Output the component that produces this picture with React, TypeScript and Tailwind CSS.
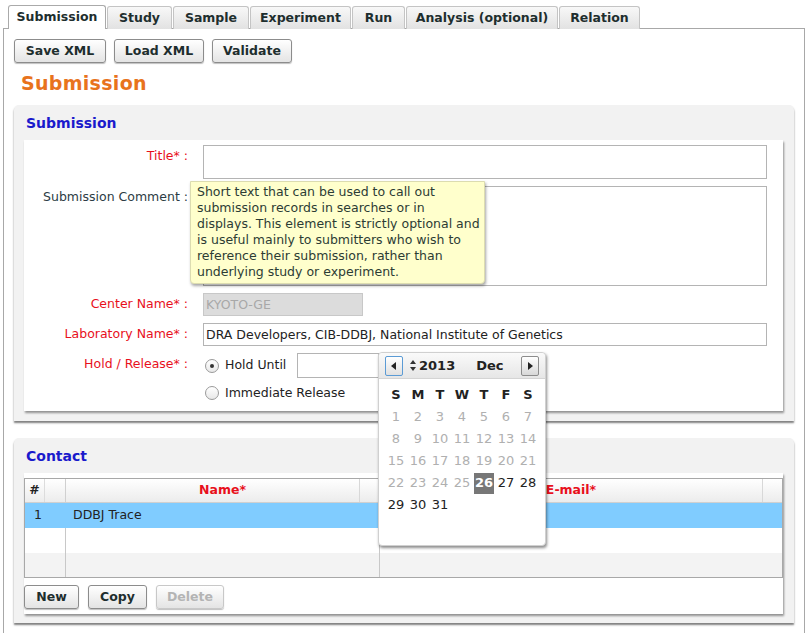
import React from "react";

const tabs = ["Submission", "Study", "Sample", "Experiment", "Run", "Analysis (optional)", "Relation"];
const tabWidths = ["w-[98px]", "w-[65px]", "w-[76px]", "w-[101px]", "w-[53px]", "w-[152px]", "w-[81px]"];

const Btn = ({ label, w, disabled }: { label: string; w: string; disabled?: boolean }) => (
  <button
    className={`${w} h-[24px] rounded-[3px] border text-[12.5px] font-bold bg-gradient-to-b from-white to-[#e4e4e4] shadow-[0_1px_1px_rgba(0,0,0,0.25)] ${
      disabled ? "border-[#c8c8c8] text-[#b4b4b4]" : "border-[#8c8c8c] text-[#1e2e2e]"
    }`}
  >
    {label}
  </button>
);

const Label = ({ text, red }: { text: string; red?: boolean }) => (
  <div className={`w-[164px] shrink-0 text-right pt-[2px] text-[12.5px] ${red ? "text-[#e8101c]" : "text-[#2c3c44]"}`}>
    {text}
  </div>
);

const Radio = ({ checked }: { checked?: boolean }) => (
  <span className="w-[14px] h-[14px] rounded-full border border-[#9a9a9a] bg-gradient-to-b from-white to-[#e8e8e8] flex items-center justify-center">
    {checked && <span className="w-[4px] h-[4px] rounded-full bg-[#333]" />}
  </span>
);

const days = ["S", "M", "T", "W", "T", "F", "S"];

const Calendar = () => {
  const cells: number[] = [];
  for (let i = 1; i <= 31; i++) cells.push(i);
  return (
    <div className="absolute left-[378px] top-[352px] w-[168px] h-[194px] bg-white rounded-[4px] border border-[#d0d0d0] shadow-[1px_2px_3px_rgba(0,0,0,0.45)]">
      <div className="h-[26px] flex items-center px-[6px] bg-gradient-to-b from-[#fafafa] to-[#e6e6e6] border-b border-[#d4d4d4] rounded-t-[4px]">
        <span className="w-[18px] h-[20px] rounded-[2px] border border-[#5b9bd5] bg-gradient-to-b from-white to-[#e0e0e0] flex items-center justify-center">
          <svg width="6" height="8" viewBox="0 0 6 8">
            <path d="M5 0 L0 4 L5 8 Z" fill="#222" />
          </svg>
        </span>
        <svg className="ml-[7px]" width="6" height="11" viewBox="0 0 6 11">
          <path d="M3 0 L6 4 L0 4 Z M3 11 L6 7 L0 7 Z" fill="#333" />
        </svg>
        <span className="ml-[3px] text-[13px] font-bold text-[#222]">2013</span>
        <span className="ml-[21px] text-[13px] font-bold text-[#222]">Dec</span>
        <span className="ml-auto w-[18px] h-[20px] rounded-[2px] border border-[#8c8c8c] bg-gradient-to-b from-white to-[#d8d8d8] flex items-center justify-center">
          <svg width="6" height="8" viewBox="0 0 6 8">
            <path d="M1 0 L6 4 L1 8 Z" fill="#222" />
          </svg>
        </span>
      </div>
      <div className="grid grid-cols-[repeat(7,22px)] px-[6px] pt-[5px] auto-rows-[22px] text-[13px]">
        {days.map((d, i) => (
          <div key={i} className="flex items-center justify-center font-bold text-[#222]">
            {d}
          </div>
        ))}
        {cells.map((n) => (
          <div key={n} className="flex items-center justify-center">
            {n === 26 ? (
              <span className="w-[20px] h-[21px] bg-[#777] text-white font-bold flex items-center justify-center">26</span>
            ) : (
              <span className={n < 26 ? "text-[#b0b0b0]" : "text-[#222]"}>{n}</span>
            )}
          </div>
        ))}
      </div>
    </div>
  );
};

export default function App() {
  return (
    <div className="relative w-[808px] h-[633px] bg-white overflow-hidden font-['DejaVu_Sans',Verdana,sans-serif] text-[#222]">
      {/* tabs */}
      <div className="flex pl-[8px] pt-[5px] gap-[1px]">
        {tabs.map((t, i) => (
          <div
            key={t}
            className={`${tabWidths[i]} flex items-center justify-center text-[12.5px] font-bold text-[#1e2e2e] border border-b-0 rounded-t-[3px] ${
              i === 0 ? "bg-white border-[#aaa] relative z-10 h-[24px]" : "bg-gradient-to-b from-[#f8f8f8] to-[#e2e2e2] border-[#c4c4c4] h-[23px] mt-[1px]"
            }`}
          >
            {t}
          </div>
        ))}
      </div>

      <div className="mx-[3px] -mt-px border border-[#a8a8a8] border-b-0 h-[700px] pl-[10px] pr-[9px]">
        <div className="flex gap-[8px] pt-[10px]">
          <Btn label="Save XML" w="w-[92px]" />
          <Btn label="Load XML" w="w-[90px]" />
          <Btn label="Validate" w="w-[80px]" />
        </div>
        <h1 className="mt-[8px] ml-[7px] text-[19px] font-bold text-[#e8731c] tracking-[0.3px] leading-[24px]">Submission</h1>

        {/* Submission panel */}
        <div className="mt-[10px] w-[780px] rounded-t-[5px] bg-[#f2f2f2] shadow-[0_2px_2px_rgba(0,0,0,0.5)] px-[10px] pb-[10px]">
          <div className="h-[35px] pt-[8px] pl-[2px] text-[14px] font-bold text-[#1a1acc]">Submission</div>
          <div className="relative w-[759px] bg-white shadow-[1px_2px_2px_rgba(0,0,0,0.4)] pt-[5px] pb-[7px] pr-[16px]">
            <div className="flex gap-[15px]">
              <Label text="Title* :" red />
              <div className="flex-1 h-[34px] border border-[#b4b4b4]" />
            </div>
            <div className="flex gap-[15px] mt-[7px]">
              <Label text="Submission Comment :" />
              <div className="flex-1 h-[100px] border border-[#b4b4b4]" />
            </div>
            <div className="flex gap-[15px] mt-[7px]">
              <Label text="Center Name* :" red />
              <div className="w-[160px] h-[23px] border border-[#c8c8c8] bg-[#dcdcdc] text-[12.5px] text-[#a8a8a8] pl-[2px] leading-[21px]">
                KYOTO-GE
              </div>
            </div>
            <div className="flex gap-[15px] mt-[7px]">
              <Label text="Laboratory Name* :" red />
              <div className="flex-1 h-[23px] border border-[#b4b4b4] text-[12.5px] text-[#222] pl-[2px] leading-[21px]">
                DRA Developers, CIB-DDBJ, National Institute of Genetics
              </div>
            </div>
            <div className="flex gap-[15px] mt-[7px]">
              <Label text="Hold / Release* :" red />
              <div className="flex flex-col">
                <div className="flex items-center h-[25px]">
                  <span className="ml-[2px]">
                    <Radio checked />
                  </span>
                  <span className="ml-[6px] text-[12.5px] text-[#222]">Hold Until</span>
                  <div className="ml-[11px] w-[82px] h-[25px] border border-[#b4b4b4]" />
                </div>
                <div className="flex items-center h-[22px] mt-[4px]">
                  <span className="ml-[2px]">
                    <Radio />
                  </span>
                  <span className="ml-[6px] text-[12.5px] text-[#222]">Immediate Release</span>
                </div>
              </div>
            </div>

            {/* tooltip */}
            <div className="absolute left-[166px] top-[41px] w-[295px] h-[103px] bg-[#ffffcc] border border-[#dcdcb0] rounded-b-[4px] shadow-[1px_2px_3px_rgba(0,0,0,0.35)] pl-[6px] pr-[4px] pt-[2px] text-[12.5px] leading-[16px] text-[#2c3c34]">
              Short text that can be used to call out submission records in searches or in displays. This element is strictly optional and is useful mainly to submitters who wish to reference their submission, rather than underlying study or experiment.
            </div>
          </div>
        </div>

        {/* Contact panel */}
        <div className="mt-[17px] w-[780px] rounded-t-[5px] bg-[#f2f2f2] shadow-[0_2px_2px_rgba(0,0,0,0.5)] px-[10px] pb-[9px]">
          <div className="h-[35px] pt-[8px] pl-[2px] text-[14px] font-bold text-[#1a1acc]">Contact</div>
          <div className="w-[759px] bg-white shadow-[1px_2px_2px_rgba(0,0,0,0.4)] pt-[5px] pb-[5px]">
            <div className="w-[759px] h-[100px] border border-[#a8a8a8] flex flex-col text-[12.5px]">
              <div className="h-[24px] flex bg-gradient-to-b from-white to-[#ececec] border-b border-[#d0d0d0] font-bold">
                <div className="w-[20px] flex items-center justify-center border-r border-[#dcdcdc] text-[#222]">#</div>
                <div className="w-[21px] border-r border-[#d0d0d0]" />
                <div className="w-[294px] border-r border-[#d8d8d8] flex items-center justify-center text-[#e8101c] pl-[20px]">
                  Name*
                </div>
                <div className="w-[20px]" />
                <div className="w-[383px] border-r border-[#d8d8d8] flex items-center justify-center text-[#e8101c]">
                  E-mail*
                </div>
                <div className="flex-1" />
              </div>
              <div className="h-[25px] flex bg-[#80ccff] text-[#222]">
                <div className="w-[41px] pl-[9px] flex items-center">1</div>
                <div className="w-[314px] pl-[6px] flex items-center border-l border-[#80ccff]">DDBJ Trace</div>
              </div>
              <div className="h-[25px] flex">
                <div className="w-[41px] border-r border-[#c8c8c8]" />
                <div className="w-[314px] border-r border-[#c8c8c8]" />
              </div>
              <div className="flex-1 flex bg-[#f3f3f3]">
                <div className="w-[41px] border-r border-[#c8c8c8]" />
                <div className="w-[314px] border-r border-[#c8c8c8]" />
              </div>
            </div>
            <div className="flex gap-[9px] mt-[7px]">
              <Btn label="New" w="w-[55px]" />
              <Btn label="Copy" w="w-[59px]" />
              <Btn label="Delete" w="w-[68px]" disabled />
            </div>
          </div>
        </div>
      </div>

      <Calendar />
    </div>
  );
}
